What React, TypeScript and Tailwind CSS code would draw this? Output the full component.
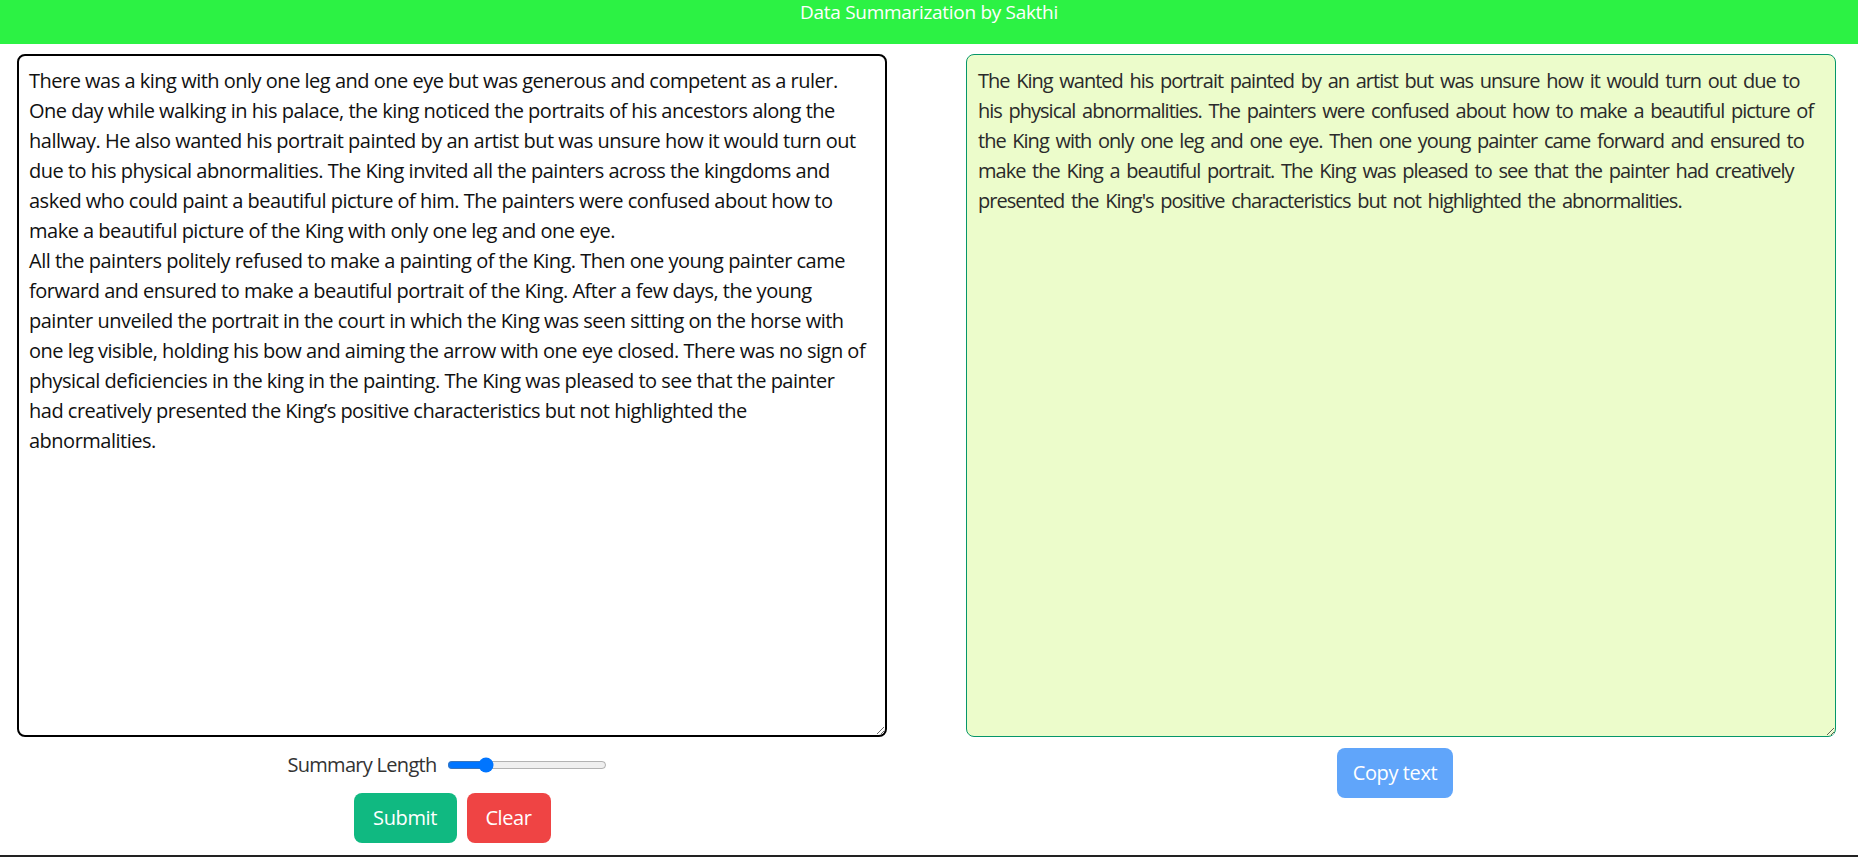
import React, { useState } from 'react';

const original = `There was a king with only one leg and one eye but was generous and competent as a ruler. One day while walking in his palace, the king noticed the portraits of his ancestors along the hallway. He also wanted his portrait painted by an artist but was unsure how it would turn out due to his physical abnormalities. The King invited all the painters across the kingdoms and asked who could paint a beautiful picture of him. The painters were confused about how to make a beautiful picture of the King with only one leg and one eye.
All the painters politely refused to make a painting of the King. Then one young painter came forward and ensured to make a beautiful portrait of the King. After a few days, the young painter unveiled the portrait in the court in which the King was seen sitting on the horse with one leg visible, holding his bow and aiming the arrow with one eye closed. There was no sign of physical deficiencies in the king in the painting. The King was pleased to see that the painter had creatively presented the King’s positive characteristics but not highlighted the abnormalities.`;

const summary = `The King wanted his portrait painted by an artist but was unsure how it would turn out due to his physical abnormalities. The painters were confused about how to make a beautiful picture of the King with only one leg and one eye. Then one young painter came forward and ensured to make the King a beautiful portrait. The King was pleased to see that the painter had creatively presented the King's positive characteristics but not highlighted the abnormalities.`;

const font = { fontFamily: '"Segoe UI", "Open Sans", sans-serif' };

export default function App() {
  const [text, setText] = useState(original);
  const [length, setLength] = useState(22);

  return (
    <div className="min-h-[857px] bg-white border-b-2 border-[#222]" style={font}>
      <div className="h-[44px] bg-[#2cf244] text-center text-white text-[19px] leading-6 tracking-[-0.3px]">
        Data Summarization by Sakthi
      </div>

      <div className="flex pt-[10px]">
        <div className="flex flex-col items-center ml-[17px] w-[870px]">
          <textarea
            value={text}
            onChange={(e) => setText(e.target.value)}
            className="w-[870px] h-[683px] border-2 border-black rounded-lg pl-[10px] pr-[12px] py-[10px] text-xl leading-[30px] tracking-[-0.5px] text-[#111] outline-none"
          />
          <div className="flex items-center gap-[10px] mt-[14px] mr-[10px] text-xl tracking-[-0.7px] text-[#333]">
            <span>Summary Length</span>
            <input
              type="range"
              min={0}
              max={100}
              value={length}
              onChange={(e) => setLength(Number(e.target.value))}
              className="w-[160px]"
            />
          </div>
          <div className="flex gap-[10px] mt-[14px]">
            <button className="w-[103px] h-[50px] rounded-lg bg-[#10b981] text-white text-xl tracking-[-0.4px]">
              Submit
            </button>
            <button className="w-[84px] h-[50px] rounded-lg bg-[#ef4444] text-white text-xl tracking-[-0.4px]">
              Clear
            </button>
          </div>
        </div>

        <div className="flex flex-col items-center ml-[79px] w-[870px]">
          <textarea
            readOnly
            value={summary}
            className="w-[870px] h-[683px] border border-[#059669] rounded-lg bg-[#ecfccb] pl-[11px] pr-[13px] py-[11px] text-xl leading-[30px] tracking-[-1px] [word-spacing:2.5px] text-[#2a2a2a] outline-none"
          />
          <button className="mt-[11px] mr-[12px] w-[116px] h-[50px] rounded-lg bg-[#60a5fa] text-white text-xl tracking-[-0.4px]">
            Copy text
          </button>
        </div>
      </div>
    </div>
  );
}
